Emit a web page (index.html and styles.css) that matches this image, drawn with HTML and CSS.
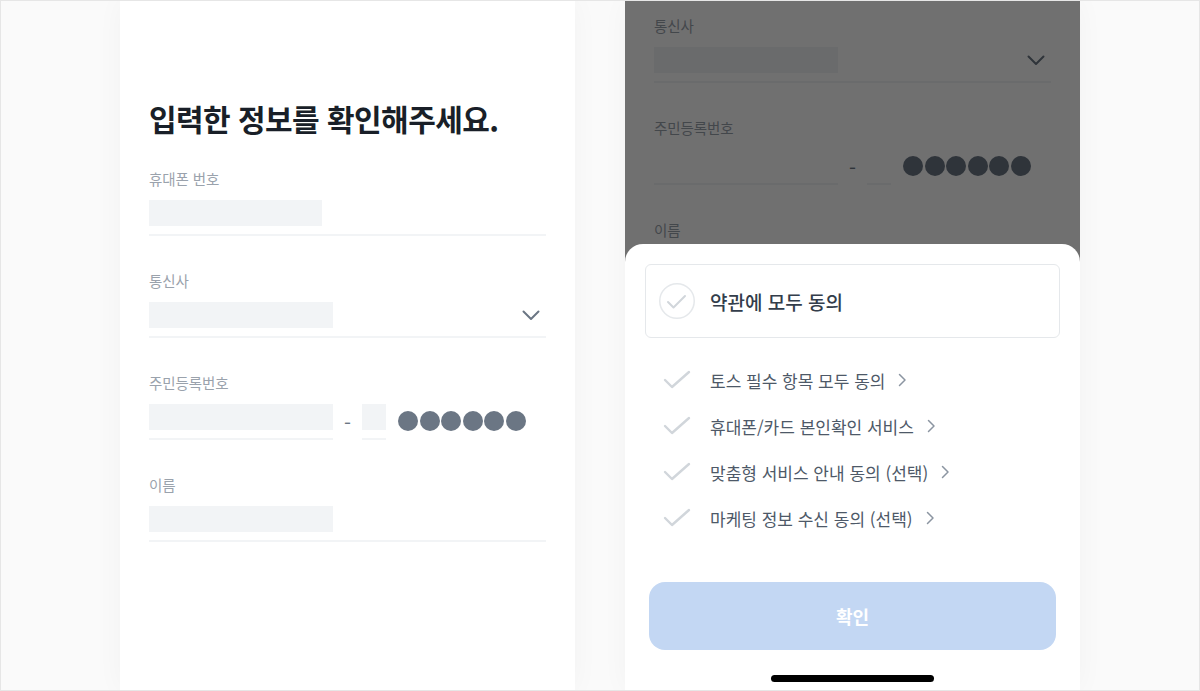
FILE: index.html
```html
<!DOCTYPE html>
<html lang="ko">
<head>
<meta charset="utf-8">
<title>정보 확인</title>
<link rel="stylesheet" href="styles.css">
</head>
<body>
<div class="frame">
  <section class="phone">
    <div class="form">
      <h1 class="title">입력한 정보를 확인해주세요.</h1>
      <div class="field">
        <div class="label">휴대폰 번호</div>
        <div class="control"><span class="ph ph-phone"></span></div>
      </div>
      <div class="field">
        <div class="label">통신사</div>
        <div class="control">
          <span class="ph"></span>
          <svg class="chev" width="18" height="11" viewBox="0 0 18 11"><polyline points="1.5,1.5 9,9 16.5,1.5" fill="none" stroke="#6b7684" stroke-width="2" stroke-linecap="round" stroke-linejoin="round"/></svg>
        </div>
      </div>
      <div class="field">
        <div class="label">주민등록번호</div>
        <div class="rrn">
          <div class="seg"><span class="ph"></span></div>
          <span class="dash">-</span>
          <div class="seg"><span class="ph ph-small"></span></div>
          <div class="dots"><i></i><i></i><i></i><i></i><i></i><i></i></div>
        </div>
      </div>
      <div class="field">
        <div class="label">이름</div>
        <div class="control"><span class="ph"></span></div>
      </div>
    </div>
  </section>

  <section class="phone">
    <div class="form scrolled">
      <div class="field">
        <div class="label">통신사</div>
        <div class="control">
          <span class="ph"></span>
          <svg class="chev" width="18" height="11" viewBox="0 0 18 11"><polyline points="1.5,1.5 9,9 16.5,1.5" fill="none" stroke="#6b7684" stroke-width="2" stroke-linecap="round" stroke-linejoin="round"/></svg>
        </div>
      </div>
      <div class="field">
        <div class="label">주민등록번호</div>
        <div class="rrn">
          <div class="seg"><span class="ph ph-empty"></span></div>
          <span class="dash">-</span>
          <div class="seg"><span class="ph ph-small ph-empty"></span></div>
          <div class="dots"><i></i><i></i><i></i><i></i><i></i><i></i></div>
        </div>
      </div>
      <div class="field">
        <div class="label">이름</div>
        <div class="control"><span class="ph"></span></div>
      </div>
    </div>
    <div class="dim"></div>
    <div class="sheet">
      <div class="all">
        <svg width="36" height="36" viewBox="0 0 36 36"><circle cx="18" cy="18" r="17.25" fill="#fff" stroke="#e5e8eb" stroke-width="1.5"/><polyline points="9,19 14.5,24.5 26,13" fill="none" stroke="#d1d6db" stroke-width="2" stroke-linecap="round" stroke-linejoin="round"/></svg>
        <span class="all-text">약관에 모두 동의</span>
      </div>
      <ul class="terms">
        <li><span class="ic"><svg width="28" height="20" viewBox="0 0 28 20"><polyline points="2,10 9,17 26,2" fill="none" stroke="#d1d6db" stroke-width="2.4" stroke-linecap="round" stroke-linejoin="round"/></svg></span><span class="term-text">토스 필수 항목 모두 동의</span><svg class="arr" width="9" height="14" viewBox="0 0 9 14"><polyline points="1.5,1.5 7,7 1.5,12.5" fill="none" stroke="#8b95a1" stroke-width="1.5" stroke-linecap="round" stroke-linejoin="round"/></svg></li>
        <li><span class="ic"><svg width="28" height="20" viewBox="0 0 28 20"><polyline points="2,10 9,17 26,2" fill="none" stroke="#d1d6db" stroke-width="2.4" stroke-linecap="round" stroke-linejoin="round"/></svg></span><span class="term-text">휴대폰/카드 본인확인 서비스</span><svg class="arr" width="9" height="14" viewBox="0 0 9 14"><polyline points="1.5,1.5 7,7 1.5,12.5" fill="none" stroke="#8b95a1" stroke-width="1.5" stroke-linecap="round" stroke-linejoin="round"/></svg></li>
        <li><span class="ic"><svg width="28" height="20" viewBox="0 0 28 20"><polyline points="2,10 9,17 26,2" fill="none" stroke="#d1d6db" stroke-width="2.4" stroke-linecap="round" stroke-linejoin="round"/></svg></span><span class="term-text">맞춤형 서비스 안내 동의 (선택)</span><svg class="arr" width="9" height="14" viewBox="0 0 9 14"><polyline points="1.5,1.5 7,7 1.5,12.5" fill="none" stroke="#8b95a1" stroke-width="1.5" stroke-linecap="round" stroke-linejoin="round"/></svg></li>
        <li><span class="ic"><svg width="28" height="20" viewBox="0 0 28 20"><polyline points="2,10 9,17 26,2" fill="none" stroke="#d1d6db" stroke-width="2.4" stroke-linecap="round" stroke-linejoin="round"/></svg></span><span class="term-text">마케팅 정보 수신 동의 (선택)</span><svg class="arr" width="9" height="14" viewBox="0 0 9 14"><polyline points="1.5,1.5 7,7 1.5,12.5" fill="none" stroke="#8b95a1" stroke-width="1.5" stroke-linecap="round" stroke-linejoin="round"/></svg></li>
      </ul>
      <button class="btn" type="button">확인</button>
      <div class="home"></div>
    </div>
  </section>
</div>
</body>
</html>
```
FILE: styles.css
```css
* { box-sizing: border-box; }
html, body { margin: 0; padding: 0; }
body {
  font-family: "Noto Sans CJK KR", "Noto Sans", sans-serif;
  background: #fafafa;
}
.frame {
  width: 1200px;
  height: 691px;
  border: 1px solid #e6e6e6;
  background: #fafafa;
  display: flex;
  justify-content: center;
  gap: 50px;
  overflow: hidden;
}
.phone {
  position: relative;
  width: 455px;
  height: 100%;
  background: #fff;
  overflow: hidden;
  box-shadow: 0 0 26px rgba(0, 0, 0, 0.035);
  flex: none;
}
.form {
  padding: 97px 29px 0;
}
.form.scrolled {
  padding-top: 15px;
}
.form.scrolled .field:first-child { margin-top: 0; }
.title {
  margin: 0;
  font-size: 30px;
  line-height: 40px;
  font-weight: 700;
  color: #191f28;
  letter-spacing: -0.55px;
}
.field { margin-top: 35px; }
.title + .field { margin-top: 31px; }
.label {
  font-size: 14.5px;
  line-height: 20px;
  color: #9aa2ac;
  letter-spacing: -0.1px;
}
.control {
  margin-top: 11px;
  padding-bottom: 8px;
  border-bottom: 2px solid #f2f4f6;
  display: flex;
  align-items: center;
  justify-content: space-between;
}
.ph {
  display: block;
  width: 184px;
  height: 26px;
  background: #f2f4f6;
}
.ph-phone { width: 173px; }
.ph-small { width: 24px; }
.ph-empty { background: transparent; }
.chev { margin-right: 6px; display: block; }
.rrn {
  margin-top: 11px;
  display: flex;
  align-items: flex-start;
}
.seg {
  padding-bottom: 8px;
  border-bottom: 2px solid #f2f4f6;
}
.dash {
  width: 29px;
  height: 26px;
  line-height: 38px;
  text-align: center;
  font-size: 20px;
  color: #6b7684;
}
.dots {
  margin-left: 12px;
  padding-top: 7px;
  display: flex;
  gap: 1.6px;
}
.dots i {
  display: block;
  width: 20px;
  height: 20px;
  border-radius: 50%;
  background: #6b7684;
}
.dim {
  position: absolute;
  inset: 0;
  background: rgba(0, 0, 0, 0.56);
}
.sheet {
  position: absolute;
  left: 0;
  right: 0;
  bottom: 0;
  background: #fff;
  border-radius: 18px 18px 0 0;
  padding: 20px 20px 8px;
}
.all {
  height: 74px;
  border: 1px solid #e5e8eb;
  border-radius: 6px;
  display: flex;
  align-items: center;
  padding-left: 13px;
  gap: 15px;
}
.all svg { display: block; }
.all-text {
  font-size: 19px;
  font-weight: 500;
  color: #333d4b;
}
.terms {
  list-style: none;
  margin: 19px 0 0;
  padding: 0;
}
.terms li {
  height: 46px;
  display: flex;
  align-items: center;
  padding-left: 14px;
}
.ic {
  width: 36px;
  display: flex;
  justify-content: center;
  margin-right: 15px;
}
.ic svg { display: block; }
.term-text {
  font-size: 17px;
  color: #4e5968;
}
.arr { margin-left: 13px; display: block; }
.btn {
  display: block;
  width: calc(100% - 8px);
  margin: 41px 4px 0;
  height: 68px;
  border: 0;
  border-radius: 16px;
  background: #c3d7f3;
  color: #fff;
  font-family: inherit;
  font-size: 18px;
  font-weight: 700;
}
.home {
  margin: 25px auto 0;
  width: 163px;
  height: 7px;
  border-radius: 4px;
  background: #000;
}
```
